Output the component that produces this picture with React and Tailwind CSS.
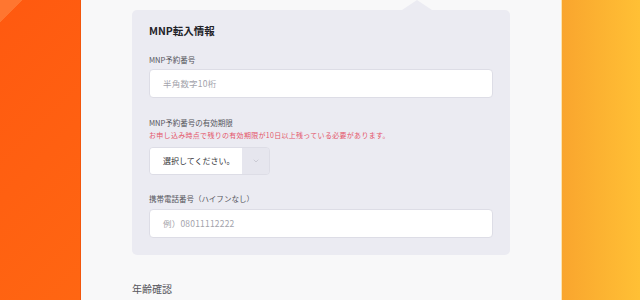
import { ChevronDown } from "lucide-react";

const font = { fontFamily: '"Noto Sans CJK JP", "Noto Sans", sans-serif' };

const TextField = ({ placeholder, className = "" }) => (
    <div className={`h-[29px] w-full rounded-[4px] border border-[#dddde6] bg-white flex items-center pl-[13px] ${className}`}>
        <span className="text-[8.5px] text-[#a3a3ab] tracking-[0.2px]">{placeholder}</span>
    </div>
);

export default function App() {
    return (
        <div className="flex h-[300px] w-[640px] overflow-hidden" style={font}>
            {/* LEFT STRIP */}
            <div className="w-[81px] shrink-0 border-r border-[#f2560c] bg-[linear-gradient(135deg,#ff7630_0,#ff7630_6%,#ff5a10_6%,#ff6612_100%)]" />

            {/* FORM PANEL */}
            <div className="w-[480px] shrink-0 bg-[#f8f8f9] pl-[51px] pt-[10px]">
                <div className="relative w-[378px] rounded-[5px] bg-[#ebebf2] px-[17px] pt-[14px] pb-[17px]">
                    {/* notch */}
                    <div className="absolute -top-[10px] left-[270px] h-0 w-0 border-x-[15px] border-x-transparent border-b-[10px] border-b-[#ebebf2]" />

                    <h3 className="text-[10.5px] leading-[14px] font-bold text-[#222228]">MNP転入情報</h3>

                    <p className="mt-[16px] text-[7.5px] leading-[12px] text-[#55555c]">MNP予約番号</p>
                    <TextField placeholder="半角数字10桁" className="mt-[3px]" />

                    <p className="mt-[19px] text-[7.5px] leading-[12px] text-[#55555c]">MNP予約番号の有効期限</p>
                    <p className="text-[7px] leading-[12px] tracking-[0.3px] text-[#e4566a]">
                        お申し込み時点で残りの有効期限が10日以上残っている必要があります。
                    </p>

                    <div className="mt-[6px] flex h-[28px] w-[121px] overflow-hidden rounded-[4px] border border-[#dddde6]">
                        <div className="flex flex-1 items-center bg-white pl-[13px]">
                            <span className="text-[8px] text-[#333338]">選択してください。</span>
                        </div>
                        <div className="flex w-[27px] items-center justify-center bg-[#e6e6ee]">
                            <ChevronDown size={8} strokeWidth={1.25} className="text-[#a5a5ae]" />
                        </div>
                    </div>

                    <p className="mt-[18px] text-[7.5px] leading-[12px] text-[#55555c]">携帯電話番号（ハイフンなし）</p>
                    <TextField placeholder="例）08011112222" className="mt-[4px] h-[28px]" />
                </div>

                <p className="mt-[27px] text-[10px] leading-[14px] text-[#55555c]">年齢確認</p>
            </div>

            {/* RIGHT STRIP */}
            <div className="flex-1 border-l border-[#fbe3b0] bg-linear-to-r from-[#f9a52e] to-[#ffc035]" />
        </div>
    );
}
